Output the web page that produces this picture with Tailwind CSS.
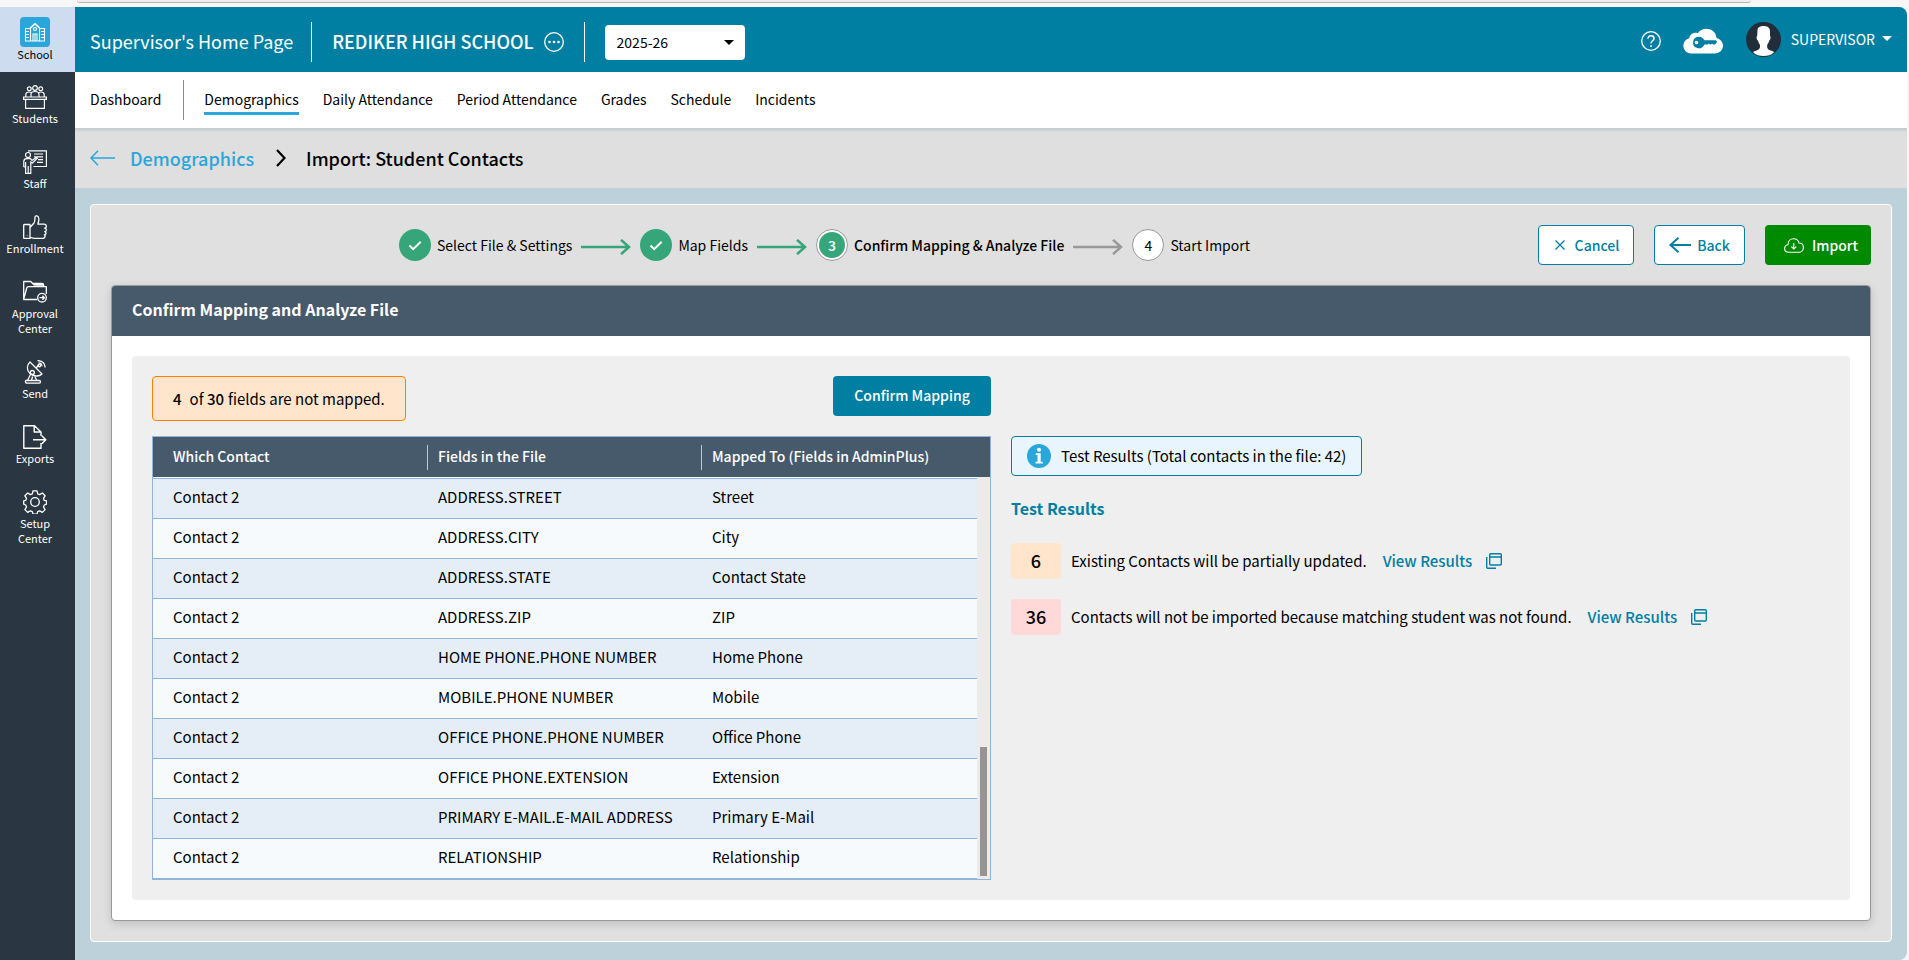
<!DOCTYPE html>
<html lang="en">
<head>
  <meta charset="UTF-8" />
  <title>Import: Student Contacts</title>
  <script src="https://cdn.jsdelivr.net/npm/@tailwindcss/browser@4"></script>
</head>
<body class="min-h-screen flex flex-col bg-[#f7f7f7] font-['Noto_Sans_CJK_SC','Open_Sans',sans-serif] text-sm text-black">

  <!-- Toolbar edge -->
  <div class="h-[7px] shrink-0 pl-[77px] pr-[158px]">
    <div class="h-[3px] rounded-b-xl border-b border-[#b5b5b5] bg-[#eeeeee]"></div>
  </div>

  <div class="flex flex-1 mr-[2px] rounded-r-lg overflow-hidden bg-[#bdd1da]">

    <!-- Sidebar -->
    <nav class="w-[75px] shrink-0 bg-[#2a3642] text-white text-[11px] leading-[15px] text-center">
      <a href="#" class="flex flex-col items-center h-[65px] pt-[10px] pr-[5px] bg-[#cddcee] text-black">
        <span class="flex items-center justify-center size-[30px] rounded bg-[#29a6da] text-white">
          <svg class="size-[22px]" fill="none" stroke="currentColor" stroke-width="1.1" viewBox="0 0 22 22">
            <path d="M1 20h20M6.500 20V6.500L11 2.500l4.500 4V20M1.500 20V7.500h5M20.500 20V7.500h-5M9 20v-7h4v7M11 13v7M1.500 10.500h3.500M1.500 13.500h3.500M1.500 16.500h3.500M17 10.500h3.500M17 13.500h3.500M17 16.500h3.500M5.500 8L11 3l5.500 5"/>
            <circle cx="11" cy="8" r="1.500"/>
          </svg>
        </span>
        School
      </a>
      <a href="#" class="flex flex-col items-center gap-[2px] pt-[13px] pb-[11px] pr-[5px]">
        <svg class="size-6" fill="none" stroke="currentColor" stroke-width="1.200" viewBox="0 0 24 24">
          <circle cx="12" cy="3" r="2.300"/><circle cx="6.300" cy="3.800" r="1.900"/><circle cx="17.700" cy="3.800" r="1.900"/>
          <path d="M8 12V9.500C8 7.500 9.500 6.500 12 6.500s4 1 4 3V12M2.800 12V9.500C2.800 7.800 4 7 6 7c1 0 1.800.2 2.300.7M21.200 12V9.500C21.200 7.800 20 7 18 7c-1 0-1.800.2-2.300.7M.6 12h22.800v2.300H.6zM2.600 14.300v9h18.800v-9"/>
        </svg>
        Students
      </a>
      <a href="#" class="flex flex-col items-center gap-[2px] pt-[13px] pb-[11px] pr-[5px]">
        <svg class="size-6" fill="none" stroke="currentColor" stroke-width="1.200" viewBox="0 0 24 24">
          <circle cx="5" cy="5" r="2.500"/>
          <path d="M5 .8h18.400V16.500H10.500M11 4h9M11 6.800h9M15 9.600h5M14 12.400h6M.8 17V11.500C.8 9.700 2 8.700 4 8.700h3.500L9 10.500l4.500-3.300.8 1L9.500 13l-1.700-1v11.300H2.600V12M5.200 16v7.300M.8 17h1.800"/>
        </svg>
        Staff
      </a>
      <a href="#" class="flex flex-col items-center gap-[2px] pt-[13px] pb-[11px] pr-[5px]">
        <svg class="size-6" fill="none" stroke="currentColor" stroke-width="1.300" stroke-linejoin="round" viewBox="0 0 24 24">
          <path d="M1.500 9.500H7v14H1.500c-.5 0-.8-.3-.8-.8V10.300c0-.5.3-.8.8-.8zM7 12.500l4-4.500c1-1.500 1-3 1-5.500C12 1.200 13 .6 14 .9c2.500.8 2.200 4.600.8 8.300H21c3 0 3 3.800.7 4 2.300.3 2.100 3.300 0 3.500 1.800.3 1.700 3-.4 3.200 1.300.4 1 3.400-1.300 3.400H11c-2 0-2.500-1-4-1M4.300 20.300v.5"/>
        </svg>
        Enrollment
      </a>
      <a href="#" class="flex flex-col items-center gap-[2px] pt-[13px] pb-[11px] pr-[5px]">
        <svg class="size-6" fill="none" stroke="currentColor" stroke-width="1.300" stroke-linejoin="round" viewBox="0 0 24 24">
          <path d="M14 19.500H.7V1.500h7l2 2H19c1 0 1.600.6 1.600 1.600v1.500M.7 19.300L3.700 8c.3-1 .9-1.400 1.800-1.400h17.800v7.500M9.700 3.500l1.500 1.500h9.400"/>
          <circle cx="19" cy="17.700" r="4.300"/><path d="M16.500 17.700h4.700M19.400 15.700l2 2-2 2"/>
        </svg>
        <span>Approval<br>Center</span>
      </a>
      <a href="#" class="flex flex-col items-center gap-[2px] pt-[13px] pb-[11px] pr-[5px]">
        <svg class="size-6" fill="none" stroke="currentColor" stroke-width="1.300" stroke-linejoin="round" viewBox="0 0 24 24">
          <path d="M7 2C3.500 5 3.500 10.500 7 13.500s9 3.500 12 .5zM13 8l3-3.200M10.500 14.500l3.500 6M8 13.500l-3.500 7M2.800 20.500h13.500c.8 0 1.200.5 1.200 1.300 0 .9-.4 1.400-1.200 1.400H4c-1 0-1.600-.5-1.600-1.400 0-.7.1-1 .4-1.300zM8.500 20.500l1-4"/>
          <circle cx="9.300" cy="12.500" r="2"/><circle cx="16.300" cy="5.500" r="1.300"/><path d="M15.500 2.800c2 0 3.300 1.200 3.500 3.400M14.500.6c4.200 0 7.300 2.400 7.700 6.900"/>
        </svg>
        Send
      </a>
      <a href="#" class="flex flex-col items-center gap-[2px] pt-[13px] pb-[11px] pr-[5px]">
        <svg class="size-6" fill="none" stroke="currentColor" stroke-width="1.400" stroke-linejoin="round" viewBox="0 0 24 24">
          <path d="M18 11V7L11.500.8H.8v22.400H18V18M11.200.8V7H18M10 14.800h12.500M18.800 10.800l4 4-4 4"/>
        </svg>
        Exports
      </a>
      <a href="#" class="flex flex-col items-center gap-[2px] pt-[13px] pb-[11px] pr-[5px]">
        <svg class="size-6" fill="none" stroke="currentColor" stroke-width="1.300" stroke-linejoin="round" viewBox="0 0 24 24">
          <path d="M10 .8h4l.7 3 2 .8 2.600-1.600 2.800 2.800-1.600 2.600.8 2 2.200.4v3.400l-2.200.8-.8 2 1.600 2.600-2.800 2.800-2.600-1.600-2 .8-.7 2.600h-4l-.7-2.600-2-.8-2.600 1.600-2.800-2.800L3.500 17l-.8-2-2-.8v-3.400l2-.4.8-2-1.600-2.600L4.700 3l2.600 1.600 2-.8z"/>
          <circle cx="12" cy="12" r="4.300"/>
        </svg>
        <span>Setup<br>Center</span>
      </a>
    </nav>

    <div class="flex-1 min-w-0">
      <!-- Header -->
      <header class="flex items-center justify-between h-[65px] px-[15px] bg-[#007fa3] text-white">
        <div class="flex items-center pt-[5px]">
          <span class="pb-[2px] text-lg leading-6">Supervisor's Home Page</span>
          <span class="w-px h-10 ml-[18px] mr-5 bg-white"></span>
          <span class="pb-[2px] text-lg leading-6 font-medium">REDIKER HIGH SCHOOL</span>
          <button class="ml-[10px]" aria-label="More schools">
            <svg class="size-5" fill="none" stroke="currentColor" stroke-width="1.300" viewBox="0 0 20 20">
              <circle cx="10" cy="10" r="9.300"/>
              <g fill="currentColor" stroke="none"><circle cx="5.500" cy="10" r="1.300"/><circle cx="10" cy="10" r="1.300"/><circle cx="14.500" cy="10" r="1.300"/></g>
            </svg>
          </button>
          <span class="w-px h-10 mx-5 bg-white"></span>
          <div class="relative">
            <select aria-label="School year" class="appearance-none w-[140px] h-[35px] pl-3 rounded bg-white text-black text-sm">
              <option>2025-26</option>
            </select>
            <svg class="absolute right-[11px] top-[15px] w-[10px] h-[5px] text-black pointer-events-none" viewBox="0 0 10 5" fill="currentColor"><path d="M0 0h10L5 5z"/></svg>
          </div>
        </div>
        <div class="flex items-center">
          <button class="mt-[2px]" aria-label="Help">
            <svg class="size-5" fill="none" stroke="currentColor" stroke-width="1.300" viewBox="0 0 20 20">
              <circle cx="10" cy="10" r="9.300"/>
              <path stroke-width="1.500" d="M7 7.800C7 5.900 8.300 4.800 10 4.800s3 1.100 3 2.700c0 2.200-3 2.400-3 5M10 14.300v1.700"/>
            </svg>
          </button>
          <button class="ml-[22px] mt-[2px]" aria-label="Cloud access">
            <svg class="w-10 h-[26px]" viewBox="0 0 40 26">
              <path fill="#fff" d="M8 25.500a7.700 7.700 0 01-1.700-15.200C6.600 6.700 10.500 3.700 14.800 5.300 16.500 2.300 19.800.7 23.500.7c5.500 0 9.700 4 10 9.300 3.700 1 6.500 4 6.500 7.600 0 4.500-3.500 7.900-8 7.900z"/>
              <path fill="#007fa3" fill-rule="evenodd" d="M16 8.700a5.800 5.800 0 015.300 3.600h11.500l1.400 1.700-2.200 2.600h-2l-1-1-1 1h-1.200l-1-1-1 1h-3.500A5.800 5.800 0 1116 8.700zm-2.500 4a1.800 1.800 0 100 3.600 1.800 1.800 0 000-3.600z"/>
            </svg>
          </button>
          <svg class="size-[35px] ml-[23px]" viewBox="0 0 35 35">
            <circle cx="17.500" cy="17.500" r="17.500" fill="#212d38"/>
            <path fill="#fff" d="M11.500 8c.2-3 3-4 6-4s6.500 1.300 6.500 5v5c1 .5.600 4-.8 4.500-.3 2-1.200 3.300-2 4.300-.3 2.800.2 4.400 2 5.200 2 .8 4 1 5 2C25.500 33 21.500 34 17.500 34S9.500 33 7 30c1-1 3-1.200 4.800-2 1.900-.8 2.500-2.400 2.200-5.200-.9-1-1.700-2.300-2-4.300-1.400-.5-1.900-4-.8-4.500z"/>
          </svg>
          <button class="flex items-center gap-[7px] ml-[10px] pb-[2px] leading-5">
            SUPERVISOR
            <svg class="w-[10px] h-[5px]" viewBox="0 0 10 5" fill="currentColor"><path d="M0 0h10L5 5z"/></svg>
          </button>
        </div>
      </header>

      <!-- Tabs -->
      <nav class="flex items-center h-[56px] pl-[15px] bg-white leading-5">
        <a href="#" class="pb-[3px]">Dashboard</a>
        <span class="w-px h-10 ml-[22px] mr-5 bg-[#8a8a8a]"></span>
        <div class="flex gap-6 pb-[3px]">
          <a href="#" class="relative">Demographics<span class="absolute inset-x-0 top-[23px] h-[3px] bg-[#29a6da]"></span></a>
          <a href="#">Daily Attendance</a>
          <a href="#">Period Attendance</a>
          <a href="#">Grades</a>
          <a href="#">Schedule</a>
          <a href="#">Incidents</a>
        </div>
      </nav>

      <!-- Breadcrumb -->
      <div class="flex items-center h-[60px] pl-[15px] pb-[2px] border-t border-[#bdd1da] bg-[#dfdfdf] text-lg leading-6 font-medium shadow-[inset_0_3px_3px_-2px_rgba(0,0,0,0.12)]">
        <a href="#" class="flex items-center gap-[15px] text-[#29a6da]">
          <svg class="w-[25px] h-4" fill="none" stroke="currentColor" stroke-width="1.500" viewBox="0 0 25 16"><path d="M25 8H1M8 .7L1 8l7 7.300"/></svg>
          Demographics
        </a>
        <svg class="w-[10px] h-[18px] ml-[22px] mr-5" fill="none" stroke="currentColor" stroke-width="2.200" viewBox="0 0 10 18"><path d="M1 1l7.500 8L1 17"/></svg>
        <h1>Import: Student Contacts</h1>
      </div>

      <main class="m-[15px] mt-4 mb-[18px] p-5 border border-white rounded bg-[#e0e0e0]">
        <!-- Steps and actions -->
        <div class="flex items-center h-10 mb-5">
          <ol class="flex flex-1 items-center justify-center gap-[9px] leading-5">
            <li class="flex items-center gap-[6px]">
              <svg class="size-8" viewBox="0 0 32 32"><circle cx="16" cy="16" r="16" fill="#36a67a"/><path d="M10.500 16.500l3.700 3.700 7.500-7.500" fill="none" stroke="#fff" stroke-width="2"/></svg>
              Select File &amp; Settings
            </li>
            <li aria-hidden="true"><svg class="w-[50px] h-4 mt-1 text-[#36a67a]" fill="none" stroke="currentColor" stroke-width="2.500" viewBox="0 0 50 16"><path d="M0 8h48M40 .8L48 8l-8 7.200"/></svg></li>
            <li class="flex items-center gap-[6px]">
              <svg class="size-8" viewBox="0 0 32 32"><circle cx="16" cy="16" r="16" fill="#36a67a"/><path d="M10.500 16.500l3.700 3.700 7.500-7.500" fill="none" stroke="#fff" stroke-width="2"/></svg>
              Map Fields
            </li>
            <li aria-hidden="true"><svg class="w-[50px] h-4 mt-1 text-[#36a67a]" fill="none" stroke="currentColor" stroke-width="2.500" viewBox="0 0 50 16"><path d="M0 8h48M40 .8L48 8l-8 7.200"/></svg></li>
            <li class="flex items-center gap-[6px] font-medium">
              <span class="flex size-8 p-[2px] rounded-full border border-[#999999] bg-white"><span class="flex flex-1 items-center justify-center rounded-full bg-[#36a67a] text-white">3</span></span>
              Confirm Mapping &amp; Analyze File
            </li>
            <li aria-hidden="true"><svg class="w-[50px] h-4 mt-1 text-[#999999]" fill="none" stroke="currentColor" stroke-width="2.500" viewBox="0 0 50 16"><path d="M0 8h48M40 .8L48 8l-8 7.200"/></svg></li>
            <li class="flex items-center gap-[6px]">
              <span class="flex items-center justify-center size-8 rounded-full border border-[#999999] bg-white">4</span>
              Start Import
            </li>
          </ol>
          <div class="flex gap-5 font-medium">
            <button class="flex items-center justify-center gap-[10px] w-24 h-10 pl-[2px] rounded border border-[#007fa3] bg-white text-[#007fa3]">
              <svg class="size-[10px]" fill="none" stroke="currentColor" stroke-width="1.300" viewBox="0 0 10 10"><path d="M.5.5l9 9M9.500.5l-9 9"/></svg>
              Cancel
            </button>
            <button class="flex items-center justify-center gap-[6px] w-[91px] h-10 rounded border border-[#007fa3] bg-white text-[#007fa3]">
              <svg class="w-[22px] h-4" fill="none" stroke="currentColor" stroke-width="2" viewBox="0 0 22 16"><path d="M22 8H2M9.500.8L1.500 8l8 7.200"/></svg>
              Back
            </button>
            <button class="flex items-center justify-center gap-2 w-[106px] h-10 pl-[6px] rounded bg-[#008a00] text-white">
              <svg class="w-5 h-[15px]" fill="none" stroke="currentColor" stroke-width="1.100" viewBox="0 0 20 15"><path d="M5 14.300C2.500 14.300.6 12.700.6 10.500c0-2 1.400-3.500 3.400-3.800C4 3.200 6.300.7 9.500.7c2.800 0 5 1.700 5.500 4.300 2.600 0 4.400 2 4.400 4.600s-1.900 4.700-4.400 4.700zM9.800 5v6M7.300 8.700l2.500 2.400 2.500-2.400"/></svg>
              Import
            </button>
          </div>
        </div>

        <section class="border border-[#999999] rounded overflow-hidden bg-white shadow-[0_3px_10px_rgba(0,0,0,0.15)]">
          <h2 class="flex items-center h-[50px] px-5 pb-1 bg-[#475a6b] text-white text-base font-bold">Confirm Mapping and Analyze File</h2>

          <div class="flex gap-5 m-5 p-5 rounded bg-[#efefef]">
            <!-- Field mapping -->
            <div class="w-[839px] shrink-0">
              <div class="flex items-start justify-between mb-[15px]">
                <p class="flex items-center h-[45px] px-5 rounded border border-[#ff8000] bg-[#ffe5cc] text-[15px]"><b class="font-medium mr-2">4</b> of&nbsp;<b class="font-medium mr-1">30</b> fields are not mapped.</p>
                <button class="w-[158px] h-10 pb-[2px] rounded bg-[#007fa3] text-white font-medium">Confirm Mapping</button>
              </div>

              <div class="relative border border-[#8fb4dd] bg-[#efefef]">
                <table class="w-full table-fixed border-separate border-spacing-0 border-b border-[#8fb4dd] text-left leading-5">
                  <thead class="bg-[#475a6b] text-white">
                    <tr>
                      <th class="w-[274px] h-[41px] p-0 border-b border-white font-medium"><div class="h-[25px] pl-5 leading-[23px]">Which Contact</div></th>
                      <th class="w-[274px] p-0 border-b border-white font-medium"><div class="h-[25px] pl-[10px] leading-[23px] border-l border-[#c0c8d0]">Fields in the File</div></th>
                      <th class="p-0 border-b border-white font-medium"><div class="h-[25px] pl-[10px] leading-[23px] border-l border-[#c0c8d0]">Mapped To (Fields in AdminPlus)</div></th>
                    </tr>
                  </thead>
                  <tbody id="rows" class="text-[15px]"></tbody>
                </table>
                <!-- Scrollbar -->
                <div class="absolute right-0 top-[40px] bottom-0 w-[13px] px-[3px] pb-[3px] flex items-end bg-[#ebebeb]">
                  <div class="w-full h-[129px] bg-[#959595]"></div>
                </div>
              </div>
            </div>

            <!-- Results -->
            <div class="flex-1 min-w-0 pt-[60px] text-[15px] leading-5">
              <p class="flex items-center gap-[10px] w-fit h-10 px-[15px] rounded border border-[#007fa3] bg-[#e8f5fc]">
                <svg class="size-6" viewBox="0 0 24 24"><circle cx="12" cy="12" r="12" fill="#29a6da"/><circle cx="12" cy="5.800" r="2" fill="#fff"/><path fill="#fff" d="M8.700 9.300h5v8.500h2v1.700H8.500v-1.700h2V11H8.700z"/></svg>
                Test Results (Total contacts in the file: 42)
              </p>
              <h3 class="mt-[21px] text-base leading-[22px] font-bold text-[#007fa3]">Test Results</h3>
              <div class="flex items-center mt-6">
                <span class="flex items-center justify-center w-[50px] h-9 mr-[10px] pb-[2px] rounded bg-[#ffe5cc] text-lg font-medium">6</span>
                Existing Contacts will be partially updated.
                <a href="#" class="flex items-center gap-[14px] ml-4 font-medium text-[#007fa3]">View Results
                  <svg class="size-4" fill="none" stroke="currentColor" stroke-width="1.400" viewBox="0 0 16 16"><rect x="3.700" y=".7" width="11.600" height="11.300" rx="1"/><path d="M3.700 4h11.600M.7 4v10.300c0 .6.400 1 1 1H10"/></svg>
                </a>
              </div>
              <div class="flex items-center mt-5">
                <span class="flex items-center justify-center w-[50px] h-9 mr-[10px] pb-[2px] rounded bg-[#ffd8d8] text-lg font-medium">36</span>
                Contacts will not be imported because matching student was not found.
                <a href="#" class="flex items-center gap-[14px] ml-4 font-medium text-[#007fa3]">View Results
                  <svg class="size-4" fill="none" stroke="currentColor" stroke-width="1.400" viewBox="0 0 16 16"><rect x="3.700" y=".7" width="11.600" height="11.300" rx="1"/><path d="M3.700 4h11.600M.7 4v10.300c0 .6.400 1 1 1H10"/></svg>
                </a>
              </div>
            </div>
          </div>
        </section>
      </main>
    </div>
  </div>

<script>
  const fields = [
    ["ADDRESS.STREET", "Street"],
    ["ADDRESS.CITY", "City"],
    ["ADDRESS.STATE", "Contact State"],
    ["ADDRESS.ZIP", "ZIP"],
    ["HOME PHONE.PHONE NUMBER", "Home Phone"],
    ["MOBILE.PHONE NUMBER", "Mobile"],
    ["OFFICE PHONE.PHONE NUMBER", "Office Phone"],
    ["OFFICE PHONE.EXTENSION", "Extension"],
    ["PRIMARY E-MAIL.E-MAIL ADDRESS", "Primary E-Mail"],
    ["RELATIONSHIP", "Relationship"]
  ];

  document.getElementById("rows").innerHTML = fields.map(([name, mapped]) => `
    <tr class="odd:bg-[#e5edf7] even:bg-[#f6fafd]">
      <td class="h-10 p-0 pb-[3px] pl-5 border-t border-[#8fb4dd]">Contact 2</td>
      <td class="p-0 pb-[3px] pl-[11px] border-t border-[#8fb4dd]">${name}</td>
      <td class="p-0 pb-[3px] pl-[11px] border-t border-[#8fb4dd]">${mapped}</td>
    </tr>`).join("");
</script>
</body>
</html>
